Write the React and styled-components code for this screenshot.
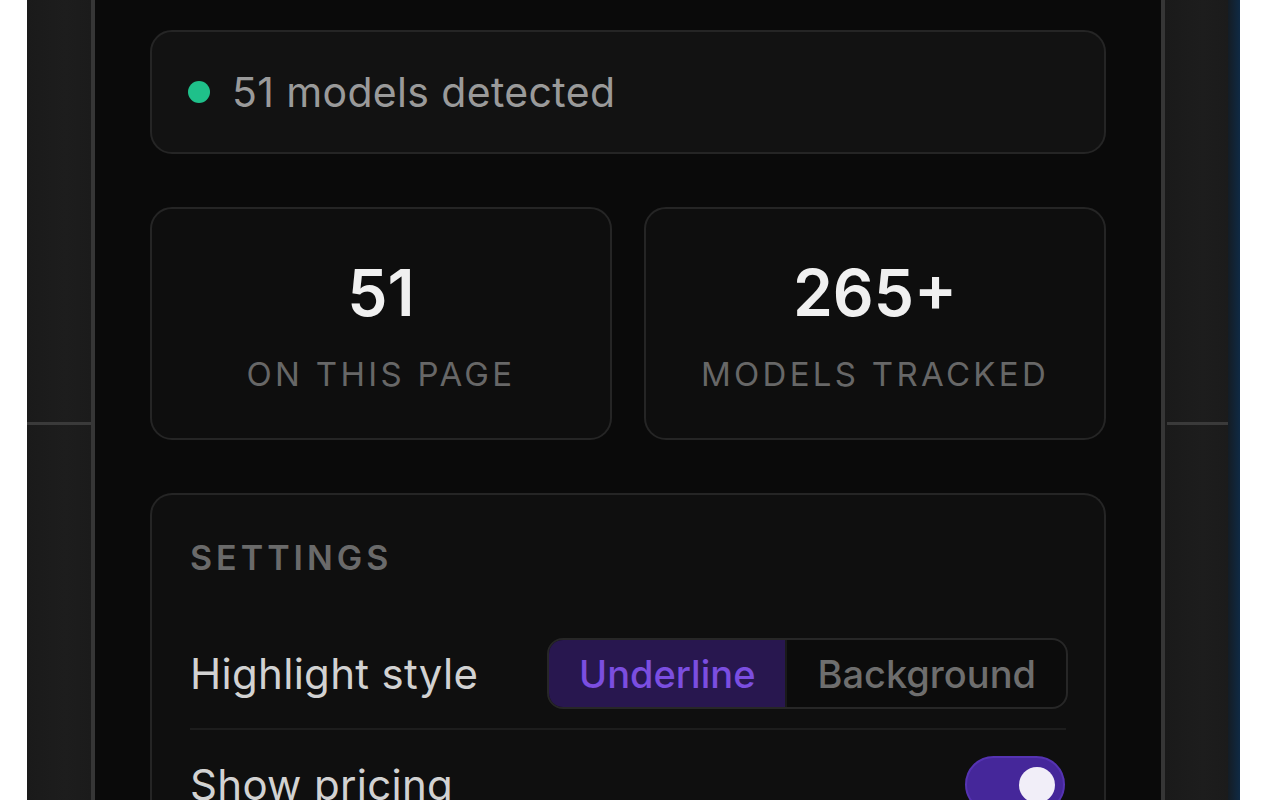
import React from "react";
import styled, { createGlobalStyle } from "styled-components";

const Global = createGlobalStyle`
  html, body { margin: 0; padding: 0; background: #ffffff; overflow: hidden; }
  * { box-sizing: border-box; }
  body { font-family: Inter, "Noto Sans", "Liberation Sans", sans-serif; }
`;

const Frame = styled.div`
  display: flex;
  height: 800px;
  width: 1280px;
  padding: 0 40px 0 27px;
  background: #ffffff;
  overflow: hidden;
`;

const Side = styled.div`
  width: ${(p) => p.$w}px;
  flex: none;
  display: flex;
  flex-direction: column;
  background: linear-gradient(90deg, #1a1a1a, #1d1d1d 60%, #1b1b1b);
`;

const SideTop = styled.div`
  height: 422px;
  flex: none;
`;

const SideRule = styled.div`
  height: 3px;
  flex: none;
  background: #3a3a3a;
  margin-left: ${(p) => p.$ml || 0}px;
`;

const EdgeStrip = styled.div`
  width: 12px;
  flex: none;
  background: linear-gradient(90deg, #141c24, #0f2a44);
`;

const Panel = styled.main`
  width: 1074px;
  flex: none;
  background: #0a0a0a;
  border-left: 4px solid #363636;
  border-right: 4px solid #363636;
  padding: 30px 55px 0 55px;
  display: flex;
  flex-direction: column;
  gap: 53px;
`;

const Card = styled.section`
  flex: none;
  background: ${(p) => p.$bg || "#111111"};
  border: 2px solid #252525;
  border-radius: 22px;
`;

const StatusCard = styled(Card)`
  height: 124px;
  display: flex;
  align-items: center;
  gap: 22px;
  padding: 0 36px;
`;

const Dot = styled.span`
  width: 22px;
  height: 22px;
  border-radius: 50%;
  background: #1fc08a;
  flex: none;
`;

const StatusText = styled.span`
  font-size: 41px;
  letter-spacing: 0.35px;
  color: #9a9a9a;
  line-height: 1;
`;

const StatGrid = styled.div`
  flex: none;
  display: grid;
  grid-template-columns: 1fr 1fr;
  gap: 32px;
`;

const StatCard = styled(Card)`
  height: 233px;
  display: flex;
  flex-direction: column;
  align-items: center;
  justify-content: center;
  gap: 33px;
  padding-top: 5px;
`;

const StatNum = styled.div`
  font-size: 64px;
  font-weight: 600;
  color: #f0f0f0;
  line-height: 1;
`;

const StatLabel = styled.div`
  font-size: 33px;
  letter-spacing: 3.3px;
  color: #676767;
  line-height: 1;
  text-transform: uppercase;
`;

const SettingsCard = styled(Card)`
  padding: 46px 38px 0 38px;
  height: 400px;
  border-bottom: none;
  border-bottom-left-radius: 0;
  border-bottom-right-radius: 0;
`;

const Heading = styled.h2`
  margin: 0 0 44px 0;
  font-size: 34px;
  font-weight: 600;
  letter-spacing: 4px;
  color: #6a6a6a;
  line-height: 1;
`;

const Row = styled.div`
  display: flex;
  align-items: center;
  justify-content: space-between;
  min-height: 71px;
  padding: 19px 0;
  box-sizing: content-box;
  border-bottom: ${(p) => (p.$last ? "none" : "2px solid #1d1d1d")};
`;

const RowLabel = styled.span`
  font-size: 42px;
  letter-spacing: 0.3px;
  color: #d2d2d2;
  line-height: 1;
`;

const Segmented = styled.div`
  display: flex;
  height: 71px;
  margin-right: -2px;
  border: 2px solid #272727;
  border-radius: 16px;
  overflow: hidden;
  background: #0c0c0c;
`;

const Segment = styled.button`
  border: none;
  margin: 0;
  padding: 0 30px;
  font-family: inherit;
  font-size: 38px;
  font-weight: 500;
  line-height: 1;
  background: ${(p) => (p.$active ? "#28174f" : "transparent")};
  color: ${(p) => (p.$active ? "#7b4ee0" : "#6e6e6e")};
  border-right: ${(p) => (p.$active ? "2px solid #1a1a1a" : "none")};
`;

const Toggle = styled.div`
  width: 100px;
  height: 57px;
  margin-right: 1px;
  border-radius: 29px;
  background: #45279a;
  border: 2px solid #5533b2;
  display: flex;
  align-items: center;
  justify-content: ${(p) => (p.$on ? "flex-end" : "flex-start")};
  padding: 0 8px;
`;

const Knob = styled.span`
  width: 36px;
  height: 36px;
  border-radius: 50%;
  background: #f1eef8;
`;

export default function App() {
  return (
    <>
      <Global />
      <Frame>
        <Side $w={64}>
          <SideTop />
          <SideRule />
        </Side>
        <Panel>
          <StatusCard $bg="#121212">
            <Dot />
            <StatusText>51 models detected</StatusText>
          </StatusCard>
          <StatGrid>
            <StatCard $bg="#0e0e0e">
              <StatNum>51</StatNum>
              <StatLabel>On this page</StatLabel>
            </StatCard>
            <StatCard $bg="#0e0e0e">
              <StatNum>265+</StatNum>
              <StatLabel>Models tracked</StatLabel>
            </StatCard>
          </StatGrid>
          <SettingsCard $bg="#0f0f0f">
            <Heading>SETTINGS</Heading>
            <Row>
              <RowLabel>Highlight style</RowLabel>
              <Segmented>
                <Segment $active>Underline</Segment>
                <Segment>Background</Segment>
              </Segmented>
            </Row>
            <Row $last>
              <RowLabel>Show pricing</RowLabel>
              <Toggle $on>
                <Knob />
              </Toggle>
            </Row>
          </SettingsCard>
        </Panel>
        <Side $w={63}>
          <SideTop />
          <SideRule $ml={2} />
        </Side>
        <EdgeStrip />
      </Frame>
    </>
  );
}
